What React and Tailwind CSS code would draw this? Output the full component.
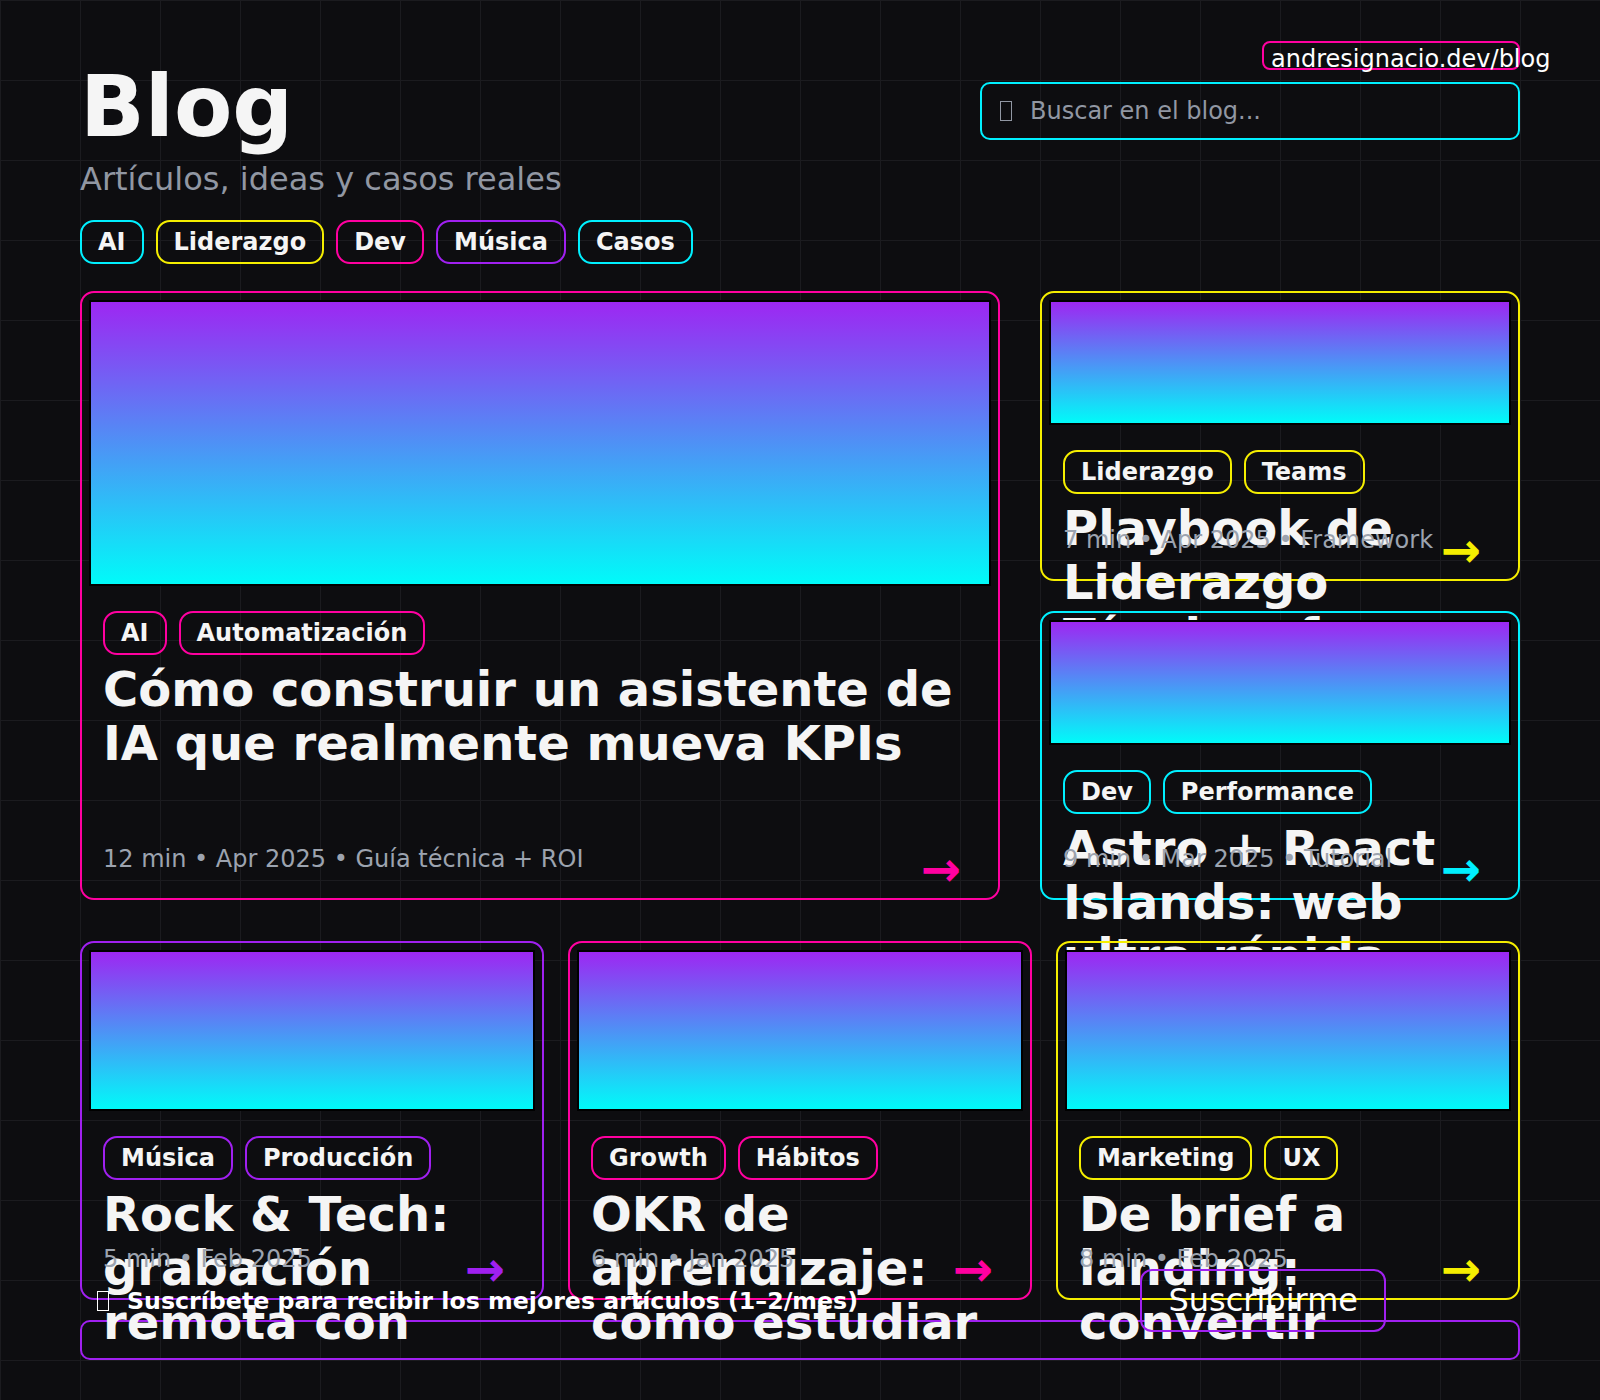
import React from 'react';

const tones = {
  cyan: { border: 'border-[#00f0ff]', text: 'text-[#00f0ff]' },
  yellow: { border: 'border-[#f5ee00]', text: 'text-[#f5ee00]' },
  pink: { border: 'border-[#ff00a0]', text: 'text-[#ff00a0]' },
  purple: { border: 'border-[#a020f0]', text: 'text-[#a020f0]' },
};

const filters = [
  { label: 'AI', tone: 'cyan' },
  { label: 'Liderazgo', tone: 'yellow' },
  { label: 'Dev', tone: 'pink' },
  { label: 'Música', tone: 'purple' },
  { label: 'Casos', tone: 'cyan' },
];

const posts = [
  {
    id: 'kpis',
    tone: 'pink',
    imgH: 'h-[286px]',
    tags: ['AI', 'Automatización'],
    title: 'Cómo construir un asistente de IA que realmente mueva KPIs',
    meta: '12 min • Apr 2025 • Guía técnica + ROI',
  },
  {
    id: 'playbook',
    tone: 'yellow',
    imgH: 'h-[125px]',
    tags: ['Liderazgo', 'Teams'],
    title: 'Playbook de Liderazgo Técnico: foco y equipos',
    meta: '7 min • Apr 2025 • Framework',
  },
  {
    id: 'astro',
    tone: 'cyan',
    imgH: 'h-[125px]',
    tags: ['Dev', 'Performance'],
    title: 'Astro + React Islands: web ultra-rápida',
    meta: '9 min • Mar 2025 • Tutorial',
  },
];

const morePosts = [
  {
    id: 'rock',
    tone: 'purple',
    imgH: 'h-[161px]',
    tags: ['Música', 'Producción'],
    title: 'Rock & Tech: grabación remota con',
    meta: '5 min • Feb 2025',
  },
  {
    id: 'okr',
    tone: 'pink',
    imgH: 'h-[161px]',
    tags: ['Growth', 'Hábitos'],
    title: 'OKR de aprendizaje: cómo estudiar',
    meta: '6 min • Jan 2025',
  },
  {
    id: 'brief',
    tone: 'yellow',
    imgH: 'h-[161px]',
    tags: ['Marketing', 'UX'],
    title: 'De brief a landing: convertir',
    meta: '8 min • Feb 2025',
  },
];

const Pill = ({ label, tone }) => (
  <span className={`rounded-[14px] border-2 ${tones[tone].border} px-[16px] py-[6px] text-[24px] font-bold leading-[28px] text-[#f5f5f5] whitespace-nowrap`}>
    {label}
  </span>
);

const Tofu = ({ className }) => (
  <span className={`inline-block h-[20px] w-[12px] shrink-0 border ${className}`} />
);

const PostCard = ({ post, className = '' }) => {
  const tone = tones[post.tone];
  return (
    <article className={`flex h-full min-h-0 flex-col rounded-[14px] border-2 ${tone.border} px-[7px] pt-[7px] pb-[5px] ${className}`}>
      <div className={`relative ${post.imgH} shrink-0 border-2 border-black bg-[linear-gradient(to_bottom,#9d27f2,#00fbf9)]`} />
      <div className="flex min-h-0 flex-1 flex-col px-[14px] pt-[25px]">
        <div className="flex gap-[12px]">
          {post.tags.map((t) => (
            <Pill key={t} label={t} tone={post.tone} />
          ))}
        </div>
        <h2 className="mt-[7px] min-h-0 flex-1 text-[48px] font-bold leading-[54px] text-[#f5f5f5]">
          {post.title}
        </h2>
        <div className="flex justify-between">
          <span className="text-[24px] leading-[28px] text-[#9ca3af]">{post.meta}</span>
          <span className={`mr-[16px] text-[48px] font-bold leading-[48px] ${tone.text}`}>→</span>
        </div>
      </div>
    </article>
  );
};

export default function App() {
  return (
    <div className="min-h-screen bg-[#0d0d10] bg-[linear-gradient(to_right,#1b1b1f_1px,transparent_1px),linear-gradient(to_bottom,#1b1b1f_1px,transparent_1px)] bg-[size:80px_80px] font-['DejaVu_Sans',sans-serif] text-[#f5f5f5]">
      <div className="mx-auto w-[1440px] pt-[41px] pb-[40px]">
        <header className="flex items-start justify-between">
          <div className="pt-[22px]">
            <h1 className="text-[85px] font-bold leading-[88px] text-[#f5f5f5]">Blog</h1>
            <p className="mt-[8px] text-[32px] leading-[40px] text-[#9197a3]">Artículos, ideas y casos reales</p>
          </div>
          <div className="flex flex-col items-end gap-[12px]">
            <a className="block h-[29px] w-[258px] rounded-[8px] border-2 border-[#ff00a0] pt-[2px] pl-[7px] text-[24px] leading-[28px] whitespace-nowrap text-white">
              andresignacio.dev/blog
            </a>
            <label className="flex h-[58px] w-[540px] items-center gap-[18px] rounded-[10px] border-2 border-[#00f0ff] px-[18px]">
              <Tofu className="border-[#9197a3]" />
              <input
                type="text"
                placeholder="Buscar en el blog..."
                className="w-full bg-transparent text-[24px] leading-[28px] text-white outline-none placeholder:text-[#9197a3]"
              />
            </label>
          </div>
        </header>

        <nav className="mt-[21px] flex gap-[12px]">
          {filters.map((f) => (
            <Pill key={f.label} label={f.label} tone={f.tone} />
          ))}
        </nav>

        <section className="mt-[27px] grid h-[609px] grid-cols-[920px_480px] grid-rows-2 gap-x-[40px] gap-y-[30px]">
          <PostCard post={posts[0]} className="row-span-2" />
          <PostCard post={posts[1]} />
          <PostCard post={posts[2]} />
        </section>

        <section className="mt-[41px] grid h-[359px] grid-cols-3 grid-rows-1 gap-[24px]">
          {morePosts.map((p) => (
            <PostCard key={p.id} post={p} />
          ))}
        </section>

        <form className="mt-[20px] h-[40px] rounded-[10px] border-2 border-[#a020f0]">
          <div className="-mt-[53px] flex h-[63px] items-center pl-[15px]">
            <Tofu className="border-white" />
            <span className="ml-[18px] text-[23.7px] font-bold leading-[28px] text-white">
              Suscríbete para recibir los mejores artículos (1–2/mes)
            </span>
            <button
              type="button"
              className="ml-auto mr-[132px] rounded-[12px] border-2 border-[#a020f0] px-[26px] py-[11px] text-[32px] leading-[37px] text-white"
            >
              Suscribirme
            </button>
          </div>
        </form>
      </div>
    </div>
  );
}
